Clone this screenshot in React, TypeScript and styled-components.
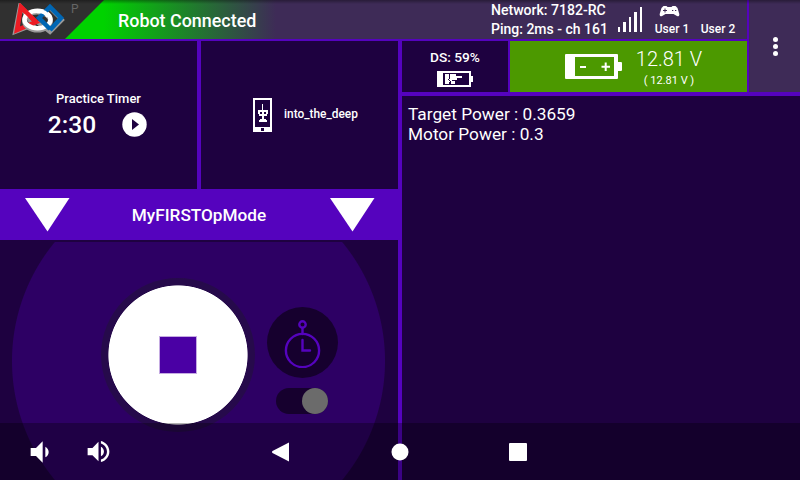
import React from "react";
import styled, { createGlobalStyle } from "styled-components";

const c = {
  accent: "#5503be",
  dark: "#1e0140",
  header: "#3e2b57",
  green: "#4c9900",
};

const GlobalStyle = createGlobalStyle`
  *, *::before, *::after { box-sizing: border-box; }
  body { margin: 0; background: ${c.dark}; font-family: Roboto, sans-serif; color: #fff; }
  svg { display: block; flex: none; }
`;

const Screen = styled.div`
  position: relative;
  width: 800px;
  height: 480px;
  overflow: hidden;
  display: grid;
  grid-template-columns: 402px 345px 53px;
  grid-template-rows: 41px 55px 384px;
  background: ${c.dark};
`;

const Header = styled.header`
  grid-column: 1 / 3;
  display: flex;
  border-bottom: 2px solid ${c.accent};
  background: linear-gradient(90deg, #00d200 0, #00d200 104px, #3e2b57 276px);
`;

const Brand = styled.div`
  width: 104px;
  display: flex;
  background: #303030;
  clip-path: polygon(0 0, 104px 0, 65px 39px, 0 39px);
`;

const Logo = styled.div`
  padding: 3px 0 0 12px;
`;

const Label = styled.div<{ $size: number; $line?: number; $weight?: number }>`
  font-size: ${(p) => p.$size}px;
  line-height: ${(p) => p.$line ?? p.$size + 4}px;
  font-weight: ${(p) => p.$weight ?? 500};
  white-space: pre;
`;

const Pending = styled(Label)`
  padding: 2px 0 0 6px;
  color: #666;
`;

const Status = styled(Label)`
  padding: 9px 0 0 14px;
  width: 387px;
`;

const Network = styled.div`
  width: 127px;
  padding-top: 1px;
`;

const Signal = styled.div`
  width: 28px;
  display: flex;
  align-items: flex-end;
  gap: 3px;
  height: 32px;
`;

const SignalBar = styled.i<{ $h: number }>`
  width: 2.4px;
  height: ${(p) => p.$h}px;
  background: #fff;
`;

const User = styled.div`
  width: 46px;
  height: 39px;
  display: flex;
  flex-direction: column;
  align-items: center;
  justify-content: flex-end;
  gap: 4px;
  padding-bottom: 2px;
`;

const PadSlot = styled.span`
  margin-right: 5px;
`;

const Users = styled.div`
  display: flex;
  margin-left: 3px;
`;

const Menu = styled.button`
  grid-column: 3;
  grid-row: 1 / 3;
  border: 0;
  border-left: 2px solid ${c.accent};
  border-bottom: 4px solid ${c.accent};
  background: ${c.header};
  padding: 1px 0 0 2px;
  display: flex;
  flex-direction: column;
  align-items: center;
  justify-content: center;
  gap: 2px;
`;

const Dot = styled.i`
  width: 5.2px;
  height: 5.2px;
  border-radius: 50%;
  background: #fff;
`;

const Controls = styled.section`
  grid-column: 1;
  grid-row: 2 / 4;
  display: flex;
  flex-direction: column;
  border-right: 4px solid ${c.accent};
`;

const Cards = styled.div`
  display: flex;
  height: 148px;
`;

const TimerCard = styled.div`
  width: 201px;
  border-right: 4px solid ${c.accent};
  padding-top: 49px;
  display: flex;
  flex-direction: column;
  align-items: center;
`;

const TimerRow = styled.div`
  display: flex;
  align-items: center;
  gap: 26px;
  margin: 3px 2px 0 0;
`;

const RobotCard = styled.div`
  display: flex;
  align-items: center;
  gap: 12px;
  padding-left: 52px;
`;

const OpMode = styled.div`
  height: 51px;
  background: ${c.accent};
  display: flex;
  align-items: center;
  justify-content: space-between;
  padding: 0 23px 0 25px;
`;

const OpModeName = styled(Label)`
  padding-top: 3px;
  margin-left: -2px;
`;

const Stage = styled.div`
  flex: 1;
  margin-top: 2px;
  display: flex;
  background: radial-gradient(circle at 198.5px 119px, #2d0064 186px, transparent 187px);
`;

const StopButton = styled.button`
  margin: 36px 0 0 101px;
  width: 154px;
  height: 154px;
  flex: none;
  border: 0;
  border-radius: 50%;
  padding: 0;
  background: radial-gradient(circle, #fff 69.2px, #260a4b 70px);
  display: grid;
  place-items: center;
`;

const StopMark = styled.i`
  width: 38px;
  height: 38px;
  border: 1px solid #c5abe2;
  background: #4a00a4;
`;

const TimerOptions = styled.div`
  margin: 65px 0 0 12px;
  display: flex;
  flex-direction: column;
  align-items: center;
  gap: 10px;
`;

const Watch = styled.div`
  width: 71px;
  height: 71px;
  border-radius: 50%;
  background: #16002e;
  display: flex;
  align-items: center;
  padding: 1px 0 0 16.5px;
`;

const Toggle = styled.div`
  width: 52px;
  height: 26px;
  margin-right: 1px;
  border-radius: 13px;
  background: #16002e;
  display: flex;
  justify-content: flex-end;
`;

const Knob = styled.i`
  width: 26px;
  height: 26px;
  border-radius: 50%;
  background: #6b6b6b;
`;

const Batteries = styled.div`
  grid-column: 2;
  grid-row: 2;
  display: flex;
  border-bottom: 4px solid ${c.accent};
`;

const StationBattery = styled.div`
  width: 108px;
  border-right: 2px solid ${c.accent};
  display: flex;
  flex-direction: column;
  align-items: center;
  padding-top: 7px;
  gap: 5px;
`;

const RobotBattery = styled.div`
  flex: 1;
  display: flex;
  background: ${c.green};
  padding: 13px 0 0 55px;
  gap: 13px;
`;

const Volts = styled.div`
  width: 68px;
  margin-top: -8px;
  display: flex;
  flex-direction: column;
  align-items: center;
  gap: 1px;
`;

const Telemetry = styled.main`
  grid-column: 2 / 4;
  grid-row: 3;
  padding: 8px 6px;
`;

const TopShade = styled.div`
  position: absolute;
  inset: 0 0 auto 0;
  height: 4px;
  background: linear-gradient(rgba(0, 0, 0, 0.35), rgba(0, 0, 0, 0));
`;

const NavBar = styled.nav`
  position: absolute;
  inset: auto 0 0 0;
  height: 57px;
  display: flex;
  align-items: center;
  padding-left: 23.5px;
  background: rgba(0, 0, 0, 0.3);
`;

const NavItem = styled.span<{ $after: number }>`
  margin-right: ${(p) => p.$after}px;
`;

const FirstLogo = () => (
  <svg width="53" height="33" viewBox="0 0 53 33" fill="none">
    <path d="M8 3 3 29l18-7Z" stroke="#999" strokeWidth="4" />
    <path d="m38 5 12 12-12 12-13-10" stroke="#999" strokeWidth="4" />
    <path d="M9 4 5 27l19-8Z" stroke="#ed1c24" strokeWidth="4.6" />
    <ellipse cx="25.5" cy="18" rx="13" ry="9" stroke="#999" strokeWidth="5" />
    <ellipse cx="25.5" cy="16.5" rx="13" ry="8.7" stroke="#fff" strokeWidth="4.5" />
    <path d="m9 4 15 15" stroke="#ed1c24" strokeWidth="4.5" />
    <path d="M38 26 27 15 38 4l11 11-11 12" stroke="#0066b3" strokeWidth="4.5" />
    <path d="M25 8.500q8-1 11 5" stroke="#fff" strokeWidth="4" />
  </svg>
);

const Gamepad = () => (
  <svg width="21" height="11" viewBox="0 0 21 11">
    <path fill="#fff" d="M4.5 0h3l1 1h4l1-1h3l2 2 1.800 6c.3 2-1.600 3.200-3.200 1.600L14.500 8h-8L4 9.600C2.300 11.200.400 10 .700 8L2.500 2Z" />
    <path stroke={c.header} d="M4 4.500h4M6 2.500v4M13 4.500h1.300M16 4.500h1.300" />
  </svg>
);

const PlayIcon = () => (
  <svg width="25" height="25" viewBox="0 0 25 25">
    <circle cx="12.5" cy="12.5" r="12.2" fill="#fff" />
    <path d="M10 7v11l7-5.500Z" fill={c.dark} />
  </svg>
);

const PhoneIcon = () => (
  <svg width="19" height="34" viewBox="0 0 19 34" shapeRendering="crispEdges">
    <path fill="#fff" fillRule="evenodd" d="M0 0h19v34H0ZM2 2v27h15V2ZM8 30v3h3v-3Z" />
    <path fill="#fff" fillRule="evenodd" d="M9 6h1v6h5v4h-1v2h-3v3h2v1h1v2H6v-2h1v-1h2v-3H6v-2H5v-4h4ZM7 14v2h2v-2ZM11 14v2h2v-2Z" />
  </svg>
);

const DownArrow = () => (
  <svg width="45" height="34" viewBox="0 0 45 34">
    <path d="M0 0h44.500L22.500 33.500Z" fill="#fff" />
  </svg>
);

const StopwatchIcon = () => (
  <svg width="37" height="49" viewBox="0 0 37 49" fill="none" stroke={c.accent} strokeWidth="2.4">
    <circle cx="18.500" cy="31.500" r="16.600" />
    <circle cx="18.500" cy="5.500" r="3.200" />
    <path d="M18.500 9v6M18.500 21v10.500h7.500" strokeLinecap="round" />
  </svg>
);

const SmallBattery = () => (
  <svg width="36" height="16" viewBox="0 0 36 16" shapeRendering="crispEdges">
    <path fill="#fff" fillRule="evenodd" d="M0 0h34v5h2v6h-2v5H0ZM6 2v12h26V2Z" />
    <path fill="#fff" d="M8 3h4v5h1V3h6v2h6v2h-5v2h-2v4h-4v-2h-2v2H8Z" />
    <path stroke={c.dark} d="m11 8 3 3M15 9h3" />
  </svg>
);

const LargeBattery = () => (
  <svg width="57" height="25" viewBox="0 0 57 25">
    <path fill="#fff" fillRule="evenodd" d="M1 0h51q1 0 1 1v7h3q1 0 1 1v7q0 1-1 1h-3v7q0 1-1 1H1q-1 0-1-1V1q0-1 1-1ZM10 3v19h39V3Z" />
    <path stroke="#fff" strokeWidth="2" d="M15 13h6M36.500 12.700h8.500M40.700 8.500v8.500" />
  </svg>
);

const QuietSpeaker = () => (
  <svg width="32" height="32" viewBox="0 0 24 24" fill="#fff">
    <path d="M18.5 12c0-1.77-1.02-3.29-2.5-4.03v8.05c1.48-.73 2.5-2.25 2.5-4.02zM5 9v6h4l5 5V4L9 9H5z" />
  </svg>
);

const LoudSpeaker = () => (
  <svg width="29" height="29" viewBox="0 0 24 24" fill="#fff">
    <path d="M3 9v6h4l5 5V4L7 9H3zm13.5 3c0-1.77-1.02-3.29-2.5-4.03v8.05c1.48-.73 2.5-2.25 2.5-4.02zM14 3.23v2.06c2.89.86 5 3.54 5 6.71s-2.11 5.85-5 6.71v2.06c4.01-.91 7-4.49 7-8.77s-2.99-7.86-7-8.77z" />
  </svg>
);

export default function App() {
  return (
    <>
      <GlobalStyle />
      <Screen>
        <Header>
          <Brand>
            <Logo><FirstLogo /></Logo>
            <Pending $size={12} $line={15} $weight={400}>P</Pending>
          </Brand>
          <Status $size={17.9} $line={23}>Robot Connected</Status>
          <Network>
            <Label $size={14.05} $line={19}>Network: 7182-RC</Label>
            <Label $size={14} $line={19}>Ping: 2ms - ch 161</Label>
          </Network>
          <Signal>
            {[5, 10, 15, 20, 25].map((h) => <SignalBar key={h} $h={h} />)}
          </Signal>
          <Users>
            <User>
              <PadSlot><Gamepad /></PadSlot>
              <Label $size={12} $line={16}>User 1</Label>
            </User>
            <User>
              <Label $size={12} $line={16}>User 2</Label>
            </User>
          </Users>
        </Header>

        <Menu aria-label="Menu"><Dot /><Dot /><Dot /></Menu>

        <Controls>
          <Cards>
            <TimerCard>
              <Label $size={13} $line={17}>Practice Timer</Label>
              <TimerRow>
                <Label $size={24.6} $line={29}>2:30</Label>
                <PlayIcon />
              </TimerRow>
            </TimerCard>
            <RobotCard>
              <PhoneIcon />
              <Label $size={11.9}>into_the_deep</Label>
            </RobotCard>
          </Cards>
          <OpMode>
            <DownArrow />
            <OpModeName $size={17.2}>MyFIRSTOpMode</OpModeName>
            <DownArrow />
          </OpMode>
          <Stage>
            <StopButton aria-label="Stop"><StopMark /></StopButton>
            <TimerOptions>
              <Watch><StopwatchIcon /></Watch>
              <Toggle><Knob /></Toggle>
            </TimerOptions>
          </Stage>
        </Controls>

        <Batteries>
          <StationBattery>
            <Label $size={13.7} $line={18}>DS: 59%</Label>
            <SmallBattery />
          </StationBattery>
          <RobotBattery>
            <LargeBattery />
            <Volts>
              <Label $size={20} $line={27} $weight={300}>12.81 V</Label>
              <Label $size={11} $line={14} $weight={400}>( 12.81 V )</Label>
            </Volts>
          </RobotBattery>
        </Batteries>

        <Telemetry>
          <Label $size={17.25} $line={20} $weight={400}>Target Power : 0.3659</Label>
          <Label $size={17.25} $line={20} $weight={400}>Motor Power : 0.3</Label>
        </Telemetry>

        <TopShade />
        <NavBar>
          <NavItem $after={28.5}><QuietSpeaker /></NavItem>
          <NavItem $after={159}><LoudSpeaker /></NavItem>
          <NavItem $after={100.5}>
            <svg width="18" height="20" viewBox="0 0 18 20"><path d="M17 .5v19L.5 11q-1-1 0-2Z" fill="#fff" /></svg>
          </NavItem>
          <NavItem $after={100}>
            <svg width="18" height="18"><circle cx="9" cy="9" r="8.5" fill="#fff" /></svg>
          </NavItem>
          <NavItem $after={0}>
            <svg width="18" height="18"><rect width="18" height="18" rx="1" fill="#fff" /></svg>
          </NavItem>
        </NavBar>
      </Screen>
    </>
  );
}
